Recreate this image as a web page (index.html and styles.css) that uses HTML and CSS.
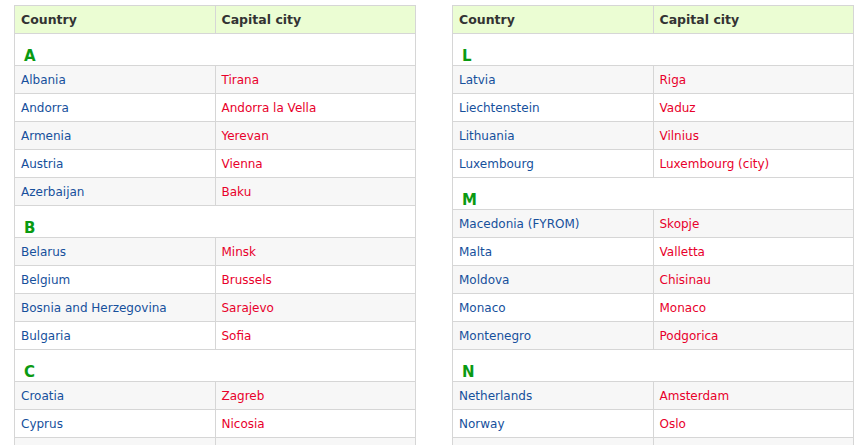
FILE: index.html
```html
<!DOCTYPE html>
<html>
<head>
<meta charset="utf-8">
<link rel="stylesheet" href="styles.css">
</head>
<body>
<div class="wrap">
  <table class="caps">
    <thead><tr><th>Country</th><th>Capital city</th></tr></thead>
    <tbody>
      <tr class="sec"><td colspan="2">A</td></tr>
      <tr class="odd"><td class="c">Albania</td><td class="k">Tirana</td></tr>
      <tr><td class="c">Andorra</td><td class="k">Andorra la Vella</td></tr>
      <tr class="odd"><td class="c">Armenia</td><td class="k">Yerevan</td></tr>
      <tr><td class="c">Austria</td><td class="k">Vienna</td></tr>
      <tr class="odd"><td class="c">Azerbaijan</td><td class="k">Baku</td></tr>
      <tr class="sec"><td colspan="2">B</td></tr>
      <tr class="odd"><td class="c">Belarus</td><td class="k">Minsk</td></tr>
      <tr><td class="c">Belgium</td><td class="k">Brussels</td></tr>
      <tr class="odd"><td class="c">Bosnia and Herzegovina</td><td class="k">Sarajevo</td></tr>
      <tr><td class="c">Bulgaria</td><td class="k">Sofia</td></tr>
      <tr class="sec"><td colspan="2">C</td></tr>
      <tr class="odd"><td class="c">Croatia</td><td class="k">Zagreb</td></tr>
      <tr><td class="c">Cyprus</td><td class="k">Nicosia</td></tr>
      <tr class="odd"><td class="c"></td><td class="k"></td></tr>
    </tbody>
  </table>
  <table class="caps">
    <thead><tr><th>Country</th><th>Capital city</th></tr></thead>
    <tbody>
      <tr class="sec"><td colspan="2">L</td></tr>
      <tr class="odd"><td class="c">Latvia</td><td class="k">Riga</td></tr>
      <tr><td class="c">Liechtenstein</td><td class="k">Vaduz</td></tr>
      <tr class="odd"><td class="c">Lithuania</td><td class="k">Vilnius</td></tr>
      <tr><td class="c">Luxembourg</td><td class="k">Luxembourg (city)</td></tr>
      <tr class="sec"><td colspan="2">M</td></tr>
      <tr class="odd"><td class="c">Macedonia (FYROM)</td><td class="k">Skopje</td></tr>
      <tr><td class="c">Malta</td><td class="k">Valletta</td></tr>
      <tr class="odd"><td class="c">Moldova</td><td class="k">Chisinau</td></tr>
      <tr><td class="c">Monaco</td><td class="k">Monaco</td></tr>
      <tr class="odd"><td class="c">Montenegro</td><td class="k">Podgorica</td></tr>
      <tr class="sec"><td colspan="2">N</td></tr>
      <tr class="odd"><td class="c">Netherlands</td><td class="k">Amsterdam</td></tr>
      <tr><td class="c">Norway</td><td class="k">Oslo</td></tr>
      <tr class="odd"><td class="c"></td><td class="k"></td></tr>
    </tbody>
  </table>
</div>
</body>
</html>
```
FILE: styles.css
```css
html, body {
  margin: 0;
  padding: 0;
  background: #fff;
  overflow: hidden;
}
body {
  font-family: "DejaVu Sans", Verdana, sans-serif;
  font-size: 12px;
}
.wrap {
  display: flex;
  gap: 36px;
  padding: 5px 0 0 14px;
  align-items: flex-start;
}
.caps {
  width: 402px;
  border-collapse: collapse;
  table-layout: fixed;
  flex: none;
}
.caps th, .caps td {
  border: 1px solid #d6d6d6;
  text-align: left;
  padding: 0 6px;
  height: 28px;
  box-sizing: border-box;
}
.caps th {
  background: #ebfdd3;
  color: #333;
  font-weight: bold;
  font-size: 12.5px;
  height: 28px;
}
.caps tr.odd td {
  background: #f7f7f7;
}
.caps td.c {
  color: #16509c;
}
.caps td.k {
  color: #e8002b;
}
.caps tr.sec td {
  background: #fff;
  color: #0a9a12;
  font-weight: bold;
  font-size: 15px;
  height: 32px;
  padding: 13px 9px 0;
  vertical-align: top;
}
```
